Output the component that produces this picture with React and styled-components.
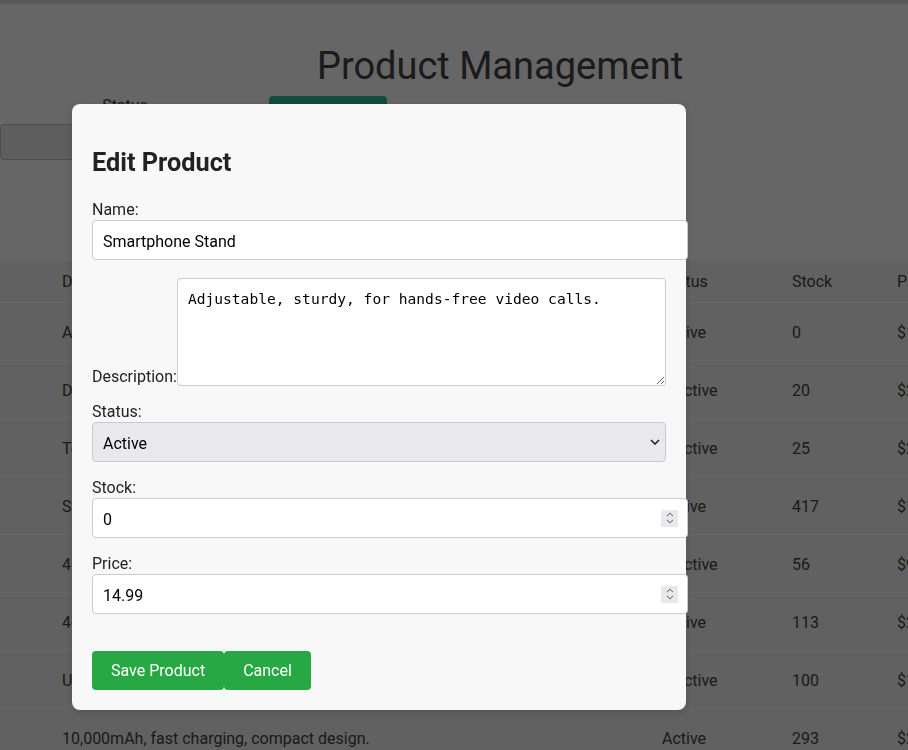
import React from "react";
import styled, { createGlobalStyle } from "styled-components";

const GlobalStyle = createGlobalStyle`
  html, body {
    margin: 0;
    padding: 0;
    overflow: hidden;
  }
  body {
    font-family: Roboto, "Liberation Sans", sans-serif;
    background: #ffffff;
    color: #444444;
  }
`;

const Page = styled.div`
  width: 1000px;
  min-height: 100vh;
`;

const TopBar = styled.div`
  height: 4px;
  background: #dedede;
`;

const Title = styled.h1`
  margin: 39.5px 0 0;
  font-size: 38px;
  font-weight: 400;
  line-height: normal;
  text-align: center;
  color: #444444;
`;

const Toolbar = styled.div`
  display: flex;
  align-items: flex-start;
  gap: 19px;
  margin-top: 8px;
`;

const FilterGroup = styled.div`
  width: 250px;
  display: flex;
  flex-direction: column;
  align-items: center;
`;

const FilterLabel = styled.label`
  font-size: 16px;
  line-height: normal;
  margin-bottom: 9px;
  color: #444444;
`;

const FilterSelect = styled.select`
  width: 100%;
  height: 36px;
  box-sizing: border-box;
  background: #ebebeb;
  border: 1px solid #c4c4c4;
  border-radius: 4px;
  font-family: Roboto, sans-serif;
  font-size: 16px;
  padding: 0 10px;
  text-align: center;
  text-align-last: center;
  appearance: none;
`;

const AddButton = styled.button`
  width: 118px;
  height: 38px;
  border: none;
  border-radius: 4px;
  background: #2fbea0;
  color: #ffffff;
  font-family: Roboto, sans-serif;
  font-size: 16px;
`;

const Table = styled.table`
  margin-top: 101px;
  width: 1000px;
  border-collapse: collapse;
  background: #f2f2f2;
  table-layout: fixed;
`;

const HeadCell = styled.th`
  box-sizing: border-box;
  height: 42px;
  padding: 1px 12px 0;
  padding-left: ${(p) => (p.$lead ? "62px" : "12px")};
  width: ${(p) => p.$w}px;
  text-align: left;
  font-weight: 400;
  font-size: 16px;
  color: #444444;
  border-bottom: 1px solid #ffffff;
  white-space: nowrap;
  overflow: hidden;
`;

const Cell = styled.td`
  box-sizing: border-box;
  height: 58px;
  padding: 2px 12px 0;
  padding-left: ${(p) => (p.$lead ? "62px" : "12px")};
  font-size: 16px;
  color: #444444;
  border-bottom: 1px solid #ffffff;
  white-space: nowrap;
  overflow: hidden;
`;

const Overlay = styled.div`
  position: fixed;
  inset: 0;
  background: rgba(0, 0, 0, 0.6);
  display: flex;
  align-items: flex-start;
  padding: 104px 0 0 72px;
`;

const Modal = styled.div`
  width: 614px;
  box-sizing: border-box;
  padding: 20px;
  background: #f8f8f8;
  border-radius: 8px;
  display: flex;
  flex-direction: column;
  box-shadow: 0 2px 10px rgba(0, 0, 0, 0.15);
`;

const ModalTitle = styled.h2`
  margin: 23.5px 0 23.5px;
  font-size: 25.3px;
  font-weight: 700;
  line-height: normal;
  color: #222222;
`;

const Field = styled.div`
  display: flex;
  flex-direction: column;
  margin-bottom: 16px;
`;

const Label = styled.label`
  display: block;
  font-size: 16px;
  line-height: 20px;
  color: #222222;
`;

const InlineField = styled.div`
  display: flex;
  align-items: flex-end;
  margin-bottom: 16px;
`;

const InlineLabel = styled.label`
  font-size: 16px;
  line-height: normal;
  color: #222222;
`;

const InputShell = styled.div`
  display: flex;
  align-items: center;
  width: 100%;
  height: 38px;
  padding: 0 10px;
  border: 1px solid #cccccc;
  border-radius: 4px;
  background: #ffffff;
`;

const TextInput = styled.input`
  flex: 1;
  min-width: 0;
  border: none;
  outline: none;
  padding: 3px 0 0;
  background: transparent;
  font-family: Roboto, sans-serif;
  font-size: 16px;
  line-height: normal;
  color: #000000;
  -moz-appearance: textfield;
  &::-webkit-inner-spin-button,
  &::-webkit-outer-spin-button {
    -webkit-appearance: none;
    margin: 0;
  }
`;

const Spinner = styled.div`
  width: 17px;
  height: 17px;
  margin-right: -1px;
  background: #e9e9ed;
  display: flex;
  flex-direction: column;
  align-items: center;
  justify-content: center;
  gap: 2px;
`;

const TextArea = styled.textarea`
  flex: 1;
  margin: 2px 0 0;
  height: 108px;
  box-sizing: border-box;
  padding: 11px 10px 9px;
  border: 1px solid #cccccc;
  border-radius: 4px;
  background: #ffffff;
  font-family: "DejaVu Sans Mono", "Liberation Mono", monospace;
  font-size: 14.6px;
  color: #000000;
  resize: both;
  outline: none;
`;

const SelectWrap = styled.div`
  position: relative;
`;

const Select = styled.select`
  width: 100%;
  height: 40px;
  box-sizing: border-box;
  padding: 3px 10px 0;
  border: 1px solid #c9c9cd;
  border-radius: 4px;
  background: #e9e9ed;
  font-family: Roboto, sans-serif;
  font-size: 16px;
  color: #000000;
  appearance: none;
  outline: none;
`;

const Chevron = styled.svg`
  position: absolute;
  right: 6px;
  top: 50%;
  transform: translateY(-50%);
  pointer-events: none;
`;

const ButtonRow = styled.div`
  display: flex;
  align-self: flex-start;
  margin-top: 21px;
`;

const Button = styled.button`
  padding: 10px 19px;
  border: none;
  border-radius: 4px;
  background: #28a745;
  color: #ffffff;
  font-family: Roboto, sans-serif;
  font-size: 16px;
  line-height: normal;
  cursor: pointer;
`;

const products = [
  { d: "Adjustable, sturdy, for hands-free video calls.", s: "Active", q: 0, p: "$14.99" },
  { d: "Durable, water-resistant, fits 15-inch laptops.", s: "Inactive", q: 20, p: "$29.99" },
  { d: "Tempered glass, scratch-resistant, easy install.", s: "Inactive", q: 25, p: "$24.99" },
  { d: "Smart LED bulb, dimmable, voice control.", s: "Active", q: 417, p: "$19.99" },
  { d: "4K HDMI cable, 6ft, gold-plated connectors.", s: "Inactive", q: 56, p: "$9.99" },
  { d: "4-port USB hub, compact, plug-and-play.", s: "Active", q: 113, p: "$22.99" },
  { d: "Ultra-slim wireless mouse, silent clicks.", s: "Inactive", q: 100, p: "$18.99" },
  { d: "10,000mAh, fast charging, compact design.", s: "Active", q: 293, p: "$29.99" },
];

function NumberSpinner() {
  return (
    <Spinner>
      <svg width="8" height="5" viewBox="0 0 8 5">
        <polyline points="1,4.2 4,1.2 7,4.2" fill="none" stroke="#7a7a80" strokeWidth="1.1" />
      </svg>
      <svg width="8" height="5" viewBox="0 0 8 5">
        <polyline points="1,0.8 4,3.8 7,0.8" fill="none" stroke="#7a7a80" strokeWidth="1.1" />
      </svg>
    </Spinner>
  );
}

export default function App() {
  return (
    <>
      <GlobalStyle />
      <Page>
        <TopBar />
        <Title>Product Management</Title>
        <Toolbar>
          <FilterGroup>
            <FilterLabel>Status</FilterLabel>
            <FilterSelect defaultValue="all">
              <option value="all">All</option>
            </FilterSelect>
          </FilterGroup>
          <AddButton>Add Product</AddButton>
        </Toolbar>
        <Table>
          <thead>
            <tr>
              <HeadCell $lead $w={650}>Description</HeadCell>
              <HeadCell $w={130}>Status</HeadCell>
              <HeadCell $w={105}>Stock</HeadCell>
              <HeadCell $w={115}>Price</HeadCell>
            </tr>
          </thead>
          <tbody>
            {products.map((r, i) => (
              <tr key={i}>
                <Cell $lead>{r.d}</Cell>
                <Cell>{r.s}</Cell>
                <Cell>{r.q}</Cell>
                <Cell>{r.p}</Cell>
              </tr>
            ))}
          </tbody>
        </Table>
      </Page>
      <Overlay>
        <Modal>
          <ModalTitle>Edit Product</ModalTitle>
          <Field>
            <Label>Name:</Label>
            <InputShell>
              <TextInput type="text" defaultValue="Smartphone Stand" />
            </InputShell>
          </Field>
          <InlineField>
            <InlineLabel>Description:</InlineLabel>
            <TextArea defaultValue="Adjustable, sturdy, for hands-free video calls." />
          </InlineField>
          <Field>
            <Label>Status:</Label>
            <SelectWrap>
              <Select defaultValue="Active">
                <option value="Active">Active</option>
                <option value="Inactive">Inactive</option>
              </Select>
              <Chevron width="10" height="6" viewBox="0 0 10 6">
                <polyline points="1,1 5,5 9,1" fill="none" stroke="#222" strokeWidth="1.6" />
              </Chevron>
            </SelectWrap>
          </Field>
          <Field>
            <Label>Stock:</Label>
            <InputShell>
              <TextInput type="number" defaultValue="0" />
              <NumberSpinner />
            </InputShell>
          </Field>
          <Field>
            <Label>Price:</Label>
            <InputShell>
              <TextInput type="number" defaultValue="14.99" />
              <NumberSpinner />
            </InputShell>
          </Field>
          <ButtonRow>
            <Button>Save Product</Button>
            <Button>Cancel</Button>
          </ButtonRow>
        </Modal>
      </Overlay>
    </>
  );
}
